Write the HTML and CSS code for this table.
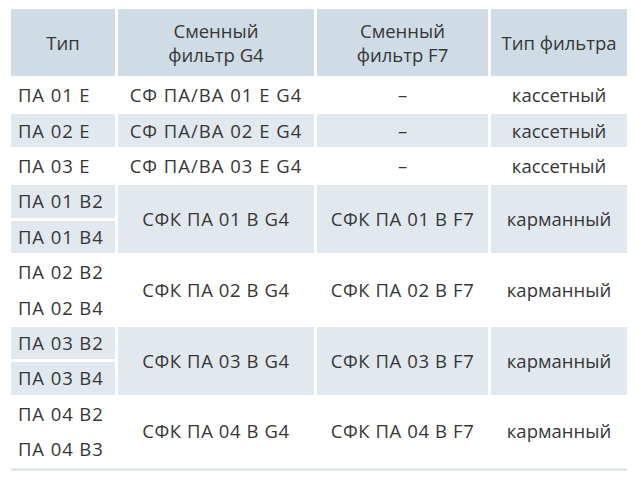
FILE: index.html
```html
<!DOCTYPE html>
<html lang="ru">
<head>
<meta charset="utf-8">
<title>Фильтры</title>
<link rel="stylesheet" href="styles.css">
</head>
<body>
<table class="spec">
  <colgroup>
    <col class="c1"><col class="c2"><col class="c3"><col class="c4">
  </colgroup>
  <thead>
    <tr class="head">
      <th>Тип</th>
      <th>Сменный<br>фильтр G4</th>
      <th>Сменный<br>фильтр F7</th>
      <th>Тип фильтра</th>
    </tr>
  </thead>
  <tbody>
    <tr class="w"><td class="t code">ПА 01 E</td><td class="code wide">СФ ПА/ВА 01 E G4</td><td>–</td><td>кассетный</td></tr>
    <tr class="b"><td class="t code">ПА 02 E</td><td class="code wide">СФ ПА/ВА 02 E G4</td><td>–</td><td>кассетный</td></tr>
    <tr class="w"><td class="t code">ПА 03 E</td><td class="code wide">СФ ПА/ВА 03 E G4</td><td>–</td><td>кассетный</td></tr>
    <tr class="b"><td class="t code">ПА 01 B2</td><td rowspan="2" class="code">СФК ПА 01 B G4</td><td rowspan="2" class="code">СФК ПА 01 B F7</td><td rowspan="2">карманный</td></tr>
    <tr class="b"><td class="t code">ПА 01 B4</td></tr>
    <tr class="w"><td class="t code">ПА 02 B2</td><td rowspan="2" class="code">СФК ПА 02 B G4</td><td rowspan="2" class="code">СФК ПА 02 B F7</td><td rowspan="2">карманный</td></tr>
    <tr class="w"><td class="t code">ПА 02 B4</td></tr>
    <tr class="b"><td class="t code">ПА 03 B2</td><td rowspan="2" class="code">СФК ПА 03 B G4</td><td rowspan="2" class="code">СФК ПА 03 B F7</td><td rowspan="2">карманный</td></tr>
    <tr class="b"><td class="t code">ПА 03 B4</td></tr>
    <tr class="w"><td class="t code">ПА 04 B2</td><td rowspan="2" class="code">СФК ПА 04 B G4</td><td rowspan="2" class="code">СФК ПА 04 B F7</td><td rowspan="2">карманный</td></tr>
    <tr class="w"><td class="t code">ПА 04 B3</td></tr>
  </tbody>
  <tfoot>
    <tr class="end"><td colspan="4"></td></tr>
  </tfoot>
</table>
</body>
</html>
```
FILE: styles.css
```css
html, body {
  background: #ffffff;
}
body {
  margin: 6px 8px;
  font-family: "Open Sans", "Liberation Sans", sans-serif;
  color: #363636;
}
.spec {
  border-collapse: separate;
  border-spacing: 3px;
  table-layout: fixed;
  width: 622px;
  font-size: 18.5px;
}
.c1 { width: 104px; }
.c2 { width: 196px; }
.c3 { width: 171px; }
.c4 { width: 136px; }
.spec th {
  background: #cfdce5;
  font-weight: normal;
  height: 67px;
  padding: 0;
  line-height: 24px;
  text-align: center;
  vertical-align: middle;
}
.spec td {
  padding: 0;
  height: 32.4px;
  line-height: 24px;
  text-align: center;
  vertical-align: middle;
  white-space: nowrap;
}
.spec td.code {
  letter-spacing: 0.6px;
}
.spec td.wide {
  letter-spacing: 1px;
}
.spec td.t {
  text-align: left;
  padding-left: 7px;
  letter-spacing: 0.9px;
}
.b td {
  background: #e1e9ef;
}
.end td {
  height: 3px;
  line-height: 0;
  font-size: 0;
  background: #e1e9ef;
}
```
